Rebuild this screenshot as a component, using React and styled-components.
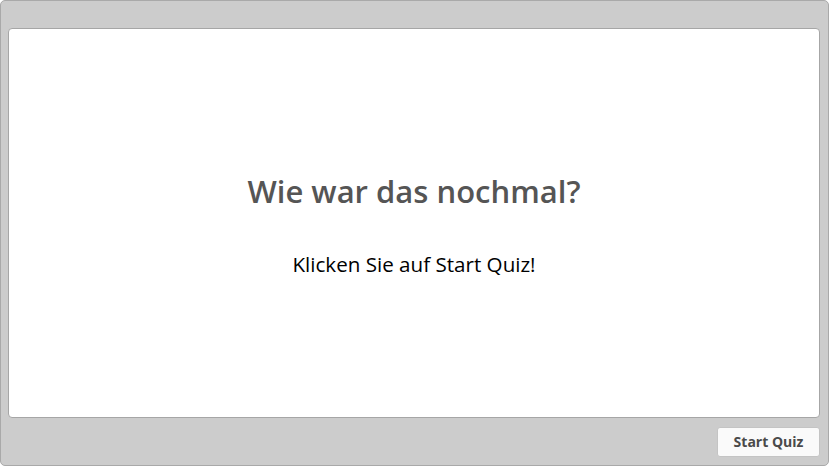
import React from "react";
import styled, { createGlobalStyle } from "styled-components";

const Global = createGlobalStyle`
  html, body { margin: 0; padding: 0; background: #ffffff; }
  body { font-family: "Open Sans", "Noto Sans", sans-serif; }
`;

const Frame = styled.div`
  box-sizing: border-box;
  width: 829px;
  height: 466px;
  background: #cccccc;
  border: 1px solid #a9a9a9;
  border-radius: 5px;
  padding: 27px 8px 0 7px;
  display: flex;
  flex-direction: column;
`;

const Panel = styled.div`
  box-sizing: border-box;
  height: 390px;
  background: #ffffff;
  border: 1px solid #a6a6a6;
  border-radius: 4px;
  display: flex;
  flex-direction: column;
  align-items: center;
  padding-top: 142px;
`;

const Title = styled.h1`
  margin: 0;
  font-size: 31px;
  font-weight: 600;
  color: #555555;
  line-height: 40px;
`;

const Subtitle = styled.p`
  margin: 40px 0 0;
  font-size: 20.6px;
  font-weight: 400;
  color: #000000;
  line-height: 27px;
`;

const Footer = styled.div`
  display: flex;
  justify-content: flex-end;
  padding-top: 9px;
`;

const Button = styled.button`
  box-sizing: border-box;
  width: 103px;
  height: 30px;
  background: #fafafa;
  border: 1px solid #c4c4c4;
  border-radius: 3px;
  font-family: "Open Sans", "Noto Sans", sans-serif;
  font-size: 14px;
  font-weight: 700;
  color: #4a4a4a;
  padding: 0 0 2px;
  cursor: pointer;
`;

export default function App() {
  return (
    <>
      <Global />
      <Frame>
        <Panel>
          <Title>Wie war das nochmal?</Title>
          <Subtitle>Klicken Sie auf Start Quiz!</Subtitle>
        </Panel>
        <Footer>
          <Button>Start Quiz</Button>
        </Footer>
      </Frame>
    </>
  );
}
